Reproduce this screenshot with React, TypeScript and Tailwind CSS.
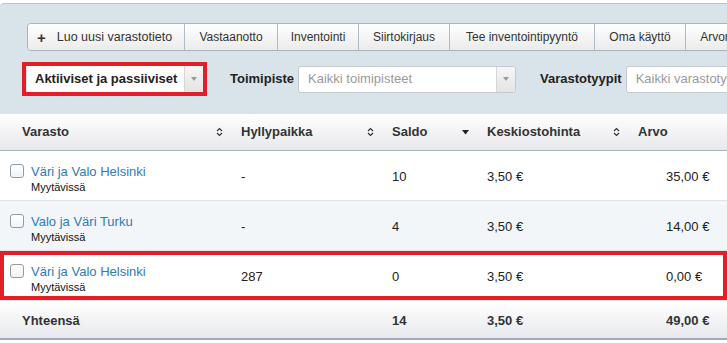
import React from 'react'

const buttons = [
  { label: 'Luo uusi varastotieto', w: 'w-[156px]', plus: true },
  { label: 'Vastaanotto', w: 'w-[93px]' },
  { label: 'Inventointi', w: 'w-[81px]' },
  { label: 'Siirtokirjaus', w: 'w-[91px]' },
  { label: 'Tee inventointipyyntö', w: 'w-[145px]' },
  { label: 'Oma käyttö', w: 'w-[91px]' },
  { label: 'Arvonmuutos', w: 'w-[100px]' },
]

const rows = [
  { name: 'Väri ja Valo Helsinki', shelf: '-', saldo: '10', avg: '3,50 €', value: '35,00 €', bg: 'bg-white', marked: false },
  { name: 'Valo ja Väri Turku', shelf: '-', saldo: '4', avg: '3,50 €', value: '14,00 €', bg: 'bg-[#f3f6f9]', marked: false },
  { name: 'Väri ja Valo Helsinki', shelf: '287', saldo: '0', avg: '3,50 €', value: '0,00 €', bg: 'bg-white', marked: true },
]

function SortBoth() {
  return (
    <svg width="7" height="10" viewBox="0 0 7 10" className="shrink-0">
      <path d="M1 4 L3.5 1.5 L6 4" fill="none" stroke="#333" strokeWidth="1.2" />
      <path d="M1 6 L3.5 8.5 L6 6" fill="none" stroke="#333" strokeWidth="1.2" />
    </svg>
  )
}

function SortDown() {
  return (
    <svg width="7" height="5" viewBox="0 0 7 5" className="shrink-0">
      <path d="M0 0 L7 0 L3.5 4.5 Z" fill="#222" />
    </svg>
  )
}

function SelectArrow() {
  return (
    <div className="flex h-full w-[19px] shrink-0 items-center justify-center border-l border-[#d6d6d6] bg-gradient-to-b from-[#f6f6f6] to-[#e4e4e4]">
      <svg width="6" height="4" viewBox="0 0 6 4">
        <path d="M0 0 L6 0 L3 4 Z" fill="#9a9a9a" />
      </svg>
    </div>
  )
}

export default function App() {
  return (
    <div className="h-[343px] w-[727px] overflow-hidden bg-white font-['Liberation_Sans',Arial,sans-serif] text-[#222]">
      {/* filter panel */}
      <div className="mt-[3px] h-[111px] overflow-hidden rounded-tl-[4px] border-t border-[#b9c5ce] bg-[#d9e3ea] pt-[19px]">
        <div className="ml-[27px] flex h-[28px] w-max overflow-hidden rounded-l-[4px] border border-[#a9b4bd] text-[12px] text-[#333]">
          {buttons.map((b, i) => (
            <div
              key={b.label}
              className={`flex h-full shrink-0 items-center bg-gradient-to-b from-[#ffffff] to-[#ebebeb] whitespace-nowrap ${b.w} ${b.plus ? 'justify-start gap-[11px] pl-[9px] text-[12.5px]' : 'justify-center'} ${i > 0 ? 'border-l border-[#b1bbc3]' : ''}`}
            >
              {b.plus && <span className="text-[15px] font-bold leading-none">+</span>}
              <span>{b.label}</span>
            </div>
          ))}
        </div>

        <div className="mt-[11px] flex w-max items-center whitespace-nowrap">
          <div className="ml-[22px] shrink-0 border-[4px] border-[#e31e26] pl-px">
            <div className="flex h-[26px] w-[176px] items-center overflow-hidden bg-white">
              <span className="flex-1 pl-[8px] text-[13px] font-bold text-[#222]">Aktiiviset ja passiiviset</span>
              <SelectArrow />
            </div>
          </div>

          <span className="ml-[23px] shrink-0 text-[13px] font-bold text-[#222]">Toimipiste</span>
          <div className="ml-[4px] flex h-[27px] w-[218px] shrink-0 items-center overflow-hidden rounded-[3px] border border-[#c3cbd1] bg-white">
            <span className="flex-1 pl-[9px] text-[13px] text-[#9a9a9a]">Kaikki toimipisteet</span>
            <SelectArrow />
          </div>

          <span className="ml-[24px] shrink-0 text-[13px] font-bold text-[#222]">Varastotyypit</span>
          <div className="ml-[4px] flex h-[27px] w-[200px] shrink-0 items-center overflow-hidden rounded-[3px] border border-[#c3cbd1] bg-white">
            <span className="pl-[9px] text-[13px] text-[#9a9a9a]">Kaikki varastotyypit</span>
          </div>
        </div>
      </div>

      {/* table */}
      <div className="text-[13px]">
        <div className="flex h-[37px] items-center border-b border-[#aab5be] bg-gradient-to-b from-[#ffffff] to-[#e7e8eb] font-bold text-[#333]">
          <div className="flex w-[230px] items-center justify-between pr-[7px] pl-[22px]">
            <span>Varasto</span>
            <SortBoth />
          </div>
          <div className="flex w-[151px] items-center justify-between pr-[7px] pl-[11px]">
            <span>Hyllypaikka</span>
            <SortBoth />
          </div>
          <div className="flex w-[95px] items-center justify-between pr-[7px] pl-[11px]">
            <span>Saldo</span>
            <SortDown />
          </div>
          <div className="flex w-[151px] items-center justify-between pr-[7px] pl-[11px]">
            <span>Keskiostohinta</span>
            <SortBoth />
          </div>
          <div className="pl-[11px]">Arvo</div>
        </div>

        {rows.map((r, i) => (
          <div
            key={i}
            className={`flex h-[50px] items-center border-b border-[#dde3e8] ${r.bg} ${r.marked ? 'shadow-[inset_0_0_0_4px_#e31e26]' : ''}`}
          >
            <div className="mt-[4px] flex w-[230px] items-start gap-[7px] pl-[10px]">
              <div className="mt-[2px] h-[14px] w-[14px] rounded-[3px] border border-[#8e9ca8] bg-gradient-to-b from-white to-[#f1f3f5]" />
              <div className="flex flex-col">
                <span className="leading-[19px] text-[#2f7ab8]">{r.name}</span>
                <span className="text-[11px] leading-[13px] text-[#111]">Myytävissä</span>
              </div>
            </div>
            <div className="w-[151px] pt-[2px] pl-[11px]">{r.shelf}</div>
            <div className="w-[95px] pt-[2px] pl-[11px]">{r.saldo}</div>
            <div className="w-[151px] pt-[2px] pl-[11px]">{r.avg}</div>
            <div className="pt-[2px] pl-[39px]">{r.value}</div>
          </div>
        ))}

        <div className="flex h-[39px] items-center border-b-2 border-[#9fadb8] bg-gradient-to-b from-[#ffffff] to-[#e8e9ed] pt-[2px] font-bold text-[#333]">
          <div className="w-[230px] pl-[22px]">Yhteensä</div>
          <div className="w-[151px]" />
          <div className="w-[95px] pl-[11px]">14</div>
          <div className="w-[151px] pl-[11px]">3,50 €</div>
          <div className="pl-[39px]">49,00 €</div>
        </div>
      </div>
    </div>
  )
}
